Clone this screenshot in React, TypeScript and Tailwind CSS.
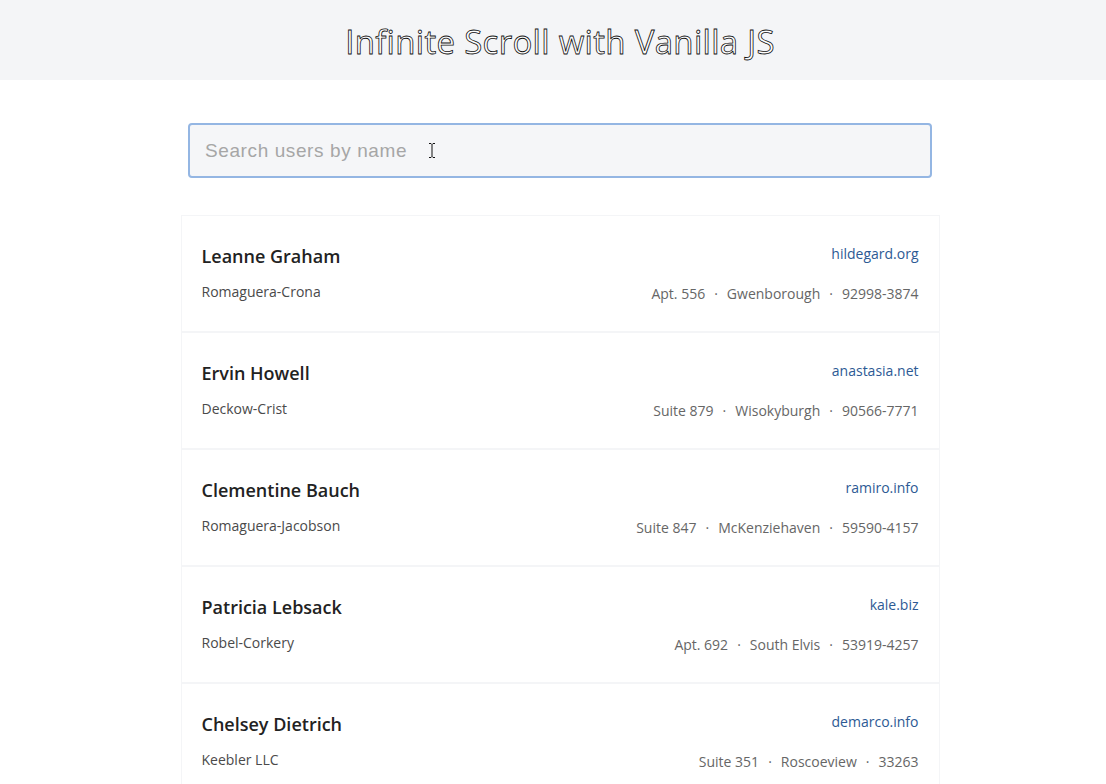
import React from "react";

type User = {
  name: string;
  company: string;
  website: string;
  suite: string;
  city: string;
  zip: string;
};

const users: User[] = [
  { name: "Leanne Graham", company: "Romaguera-Crona", website: "hildegard.org", suite: "Apt. 556", city: "Gwenborough", zip: "92998-3874" },
  { name: "Ervin Howell", company: "Deckow-Crist", website: "anastasia.net", suite: "Suite 879", city: "Wisokyburgh", zip: "90566-7771" },
  { name: "Clementine Bauch", company: "Romaguera-Jacobson", website: "ramiro.info", suite: "Suite 847", city: "McKenziehaven", zip: "59590-4157" },
  { name: "Patricia Lebsack", company: "Robel-Corkery", website: "kale.biz", suite: "Apt. 692", city: "South Elvis", zip: "53919-4257" },
  { name: "Chelsey Dietrich", company: "Keebler LLC", website: "demarco.info", suite: "Suite 351", city: "Roscoeview", zip: "33263" },
];

function UserCard({ user }: { user: User }) {
  return (
    <div className="flex justify-between h-[117px] border border-[#f4f5f7] px-[20px] pt-[26px]">
      <div className="flex flex-col">
        <span className="text-[18px] leading-[28px] font-semibold text-[#222]">{user.name}</span>
        <span className="mt-[12px] text-[14px] leading-[20px] text-[#4a4a4a]">{user.company}</span>
      </div>
      <div className="flex flex-col items-end pt-[1px]">
        <span className="text-[14px] leading-[22px] text-[#2d5a94]">{user.website}</span>
        <span className="mt-[19px] text-[14px] leading-[20px] text-[#666]">
          {user.suite}
          <span className="mx-[9px]">·</span>
          {user.city}
          <span className="mx-[9px]">·</span>
          {user.zip}
        </span>
      </div>
    </div>
  );
}

export default function App() {
  return (
    <div className="min-h-screen bg-white pl-[14px] font-['Open_Sans',sans-serif] overflow-hidden h-[784px]">
      {/* Header */}
      <header className="-ml-[14px] pl-[14px] h-[80px] bg-[#f4f5f7] flex items-center justify-center">
        <h1 className="text-[33px] leading-none text-white [-webkit-text-stroke:0.8px_#111] tracking-[0.3px] mt-[2px]">
          Infinite Scroll with Vanilla JS
        </h1>
      </header>

      <main className="flex flex-col items-center">
        {/* Search */}
        <div className="relative mt-[43px] w-[744px]">
          <input
            type="text"
            placeholder="Search users by name"
            className="w-full h-[55px] rounded-[4px] border-2 border-[#94b6e3] bg-[#f5f6f8] px-[15px] font-['Liberation_Sans',Arial,sans-serif] text-[19px] tracking-[0.6px] text-[#333] placeholder:text-[#a6a6a6] outline-none"
          />
          <svg
            className="absolute left-[240px] top-[19px]"
            width="8"
            height="17"
            viewBox="0 0 8 17"
            fill="none"
            stroke="#111"
            strokeWidth="1"
          >
            <path d="M1 1.5h2l1 1 1-1h2M4 2.5v12M1 15.5h2l1-1 1 1h2" />
          </svg>
        </div>

        {/* User list */}
        <div className="mt-[37px] w-[759px] flex flex-col">
          {users.map(u => (
            <UserCard key={u.name} user={u} />
          ))}
        </div>
      </main>
    </div>
  );
}
